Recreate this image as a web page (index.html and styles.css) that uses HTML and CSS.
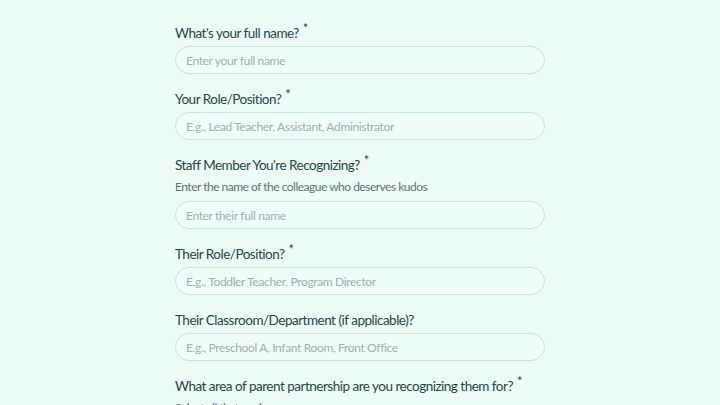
FILE: index.html
```html
<!DOCTYPE html>
<html lang="en">
<head>
    <meta charset="UTF-8">
    <meta name="viewport" content="width=device-width, initial-scale=1.0">
    <title>Staff Kudos</title>
    <link rel="stylesheet" href="styles.css">
</head>
<body>
    <form class="form">
        <div class="field">
            <label class="label">What's your full name? <span class="req">*</span></label>
            <input class="input" type="text" placeholder="Enter your full name">
        </div>
        <div class="field">
            <label class="label">Your Role/Position? <span class="req">*</span></label>
            <input class="input" type="text" placeholder="E.g., Lead Teacher, Assistant, Administrator">
        </div>
        <div class="field">
            <label class="label">Staff Member You're Recognizing? <span class="req">*</span></label>
            <p class="help">Enter the name of the colleague who deserves kudos</p>
            <input class="input" type="text" placeholder="Enter their full name">
        </div>
        <div class="field">
            <label class="label">Their Role/Position? <span class="req">*</span></label>
            <input class="input" type="text" placeholder="E.g., Toddler Teacher, Program Director">
        </div>
        <div class="field">
            <label class="label">Their Classroom/Department (if applicable)?</label>
            <input class="input" type="text" placeholder="E.g., Preschool A, Infant Room, Front Office">
        </div>
        <div class="field">
            <label class="label">What area of parent partnership are you recognizing them for? <span class="req">*</span></label>
            <p class="help">Select all that apply</p>
        </div>
    </form>
</body>
</html>
```

FILE: styles.css
```css
body {
    margin: 0;
    background: #edfaf6;
    font-family: Lato, "Open Sans", sans-serif;
    color: #1f4747;
}

.form {
    width: 370px;
    margin: 0 auto;
    padding-top: 23px;
}

.field {
    margin-bottom: 15px;
}

.label {
    display: block;
    font-size: 13.5px;
    line-height: 20px;
    margin-bottom: 3px;
    letter-spacing: -0.5px;
    white-space: nowrap;
}

.req {
    position: relative;
    top: -5px;
    margin-left: 1px;
    font-size: 13px;
}

.help {
    margin: 0 0 5px;
    font-size: 12px;
    line-height: 18px;
    letter-spacing: -0.5px;
    color: #5d7775;
}

.input {
    display: block;
    width: 100%;
    height: 28px;
    box-sizing: border-box;
    padding: 0 10px;
    border: 1px solid #c4e6de;
    border-radius: 14px;
    background: #f0fcf9;
    font-family: inherit;
    font-size: 12px;
    letter-spacing: -0.35px;
    color: #1f4747;
}

.input::placeholder {
    color: #9bb3b0;
}
```
